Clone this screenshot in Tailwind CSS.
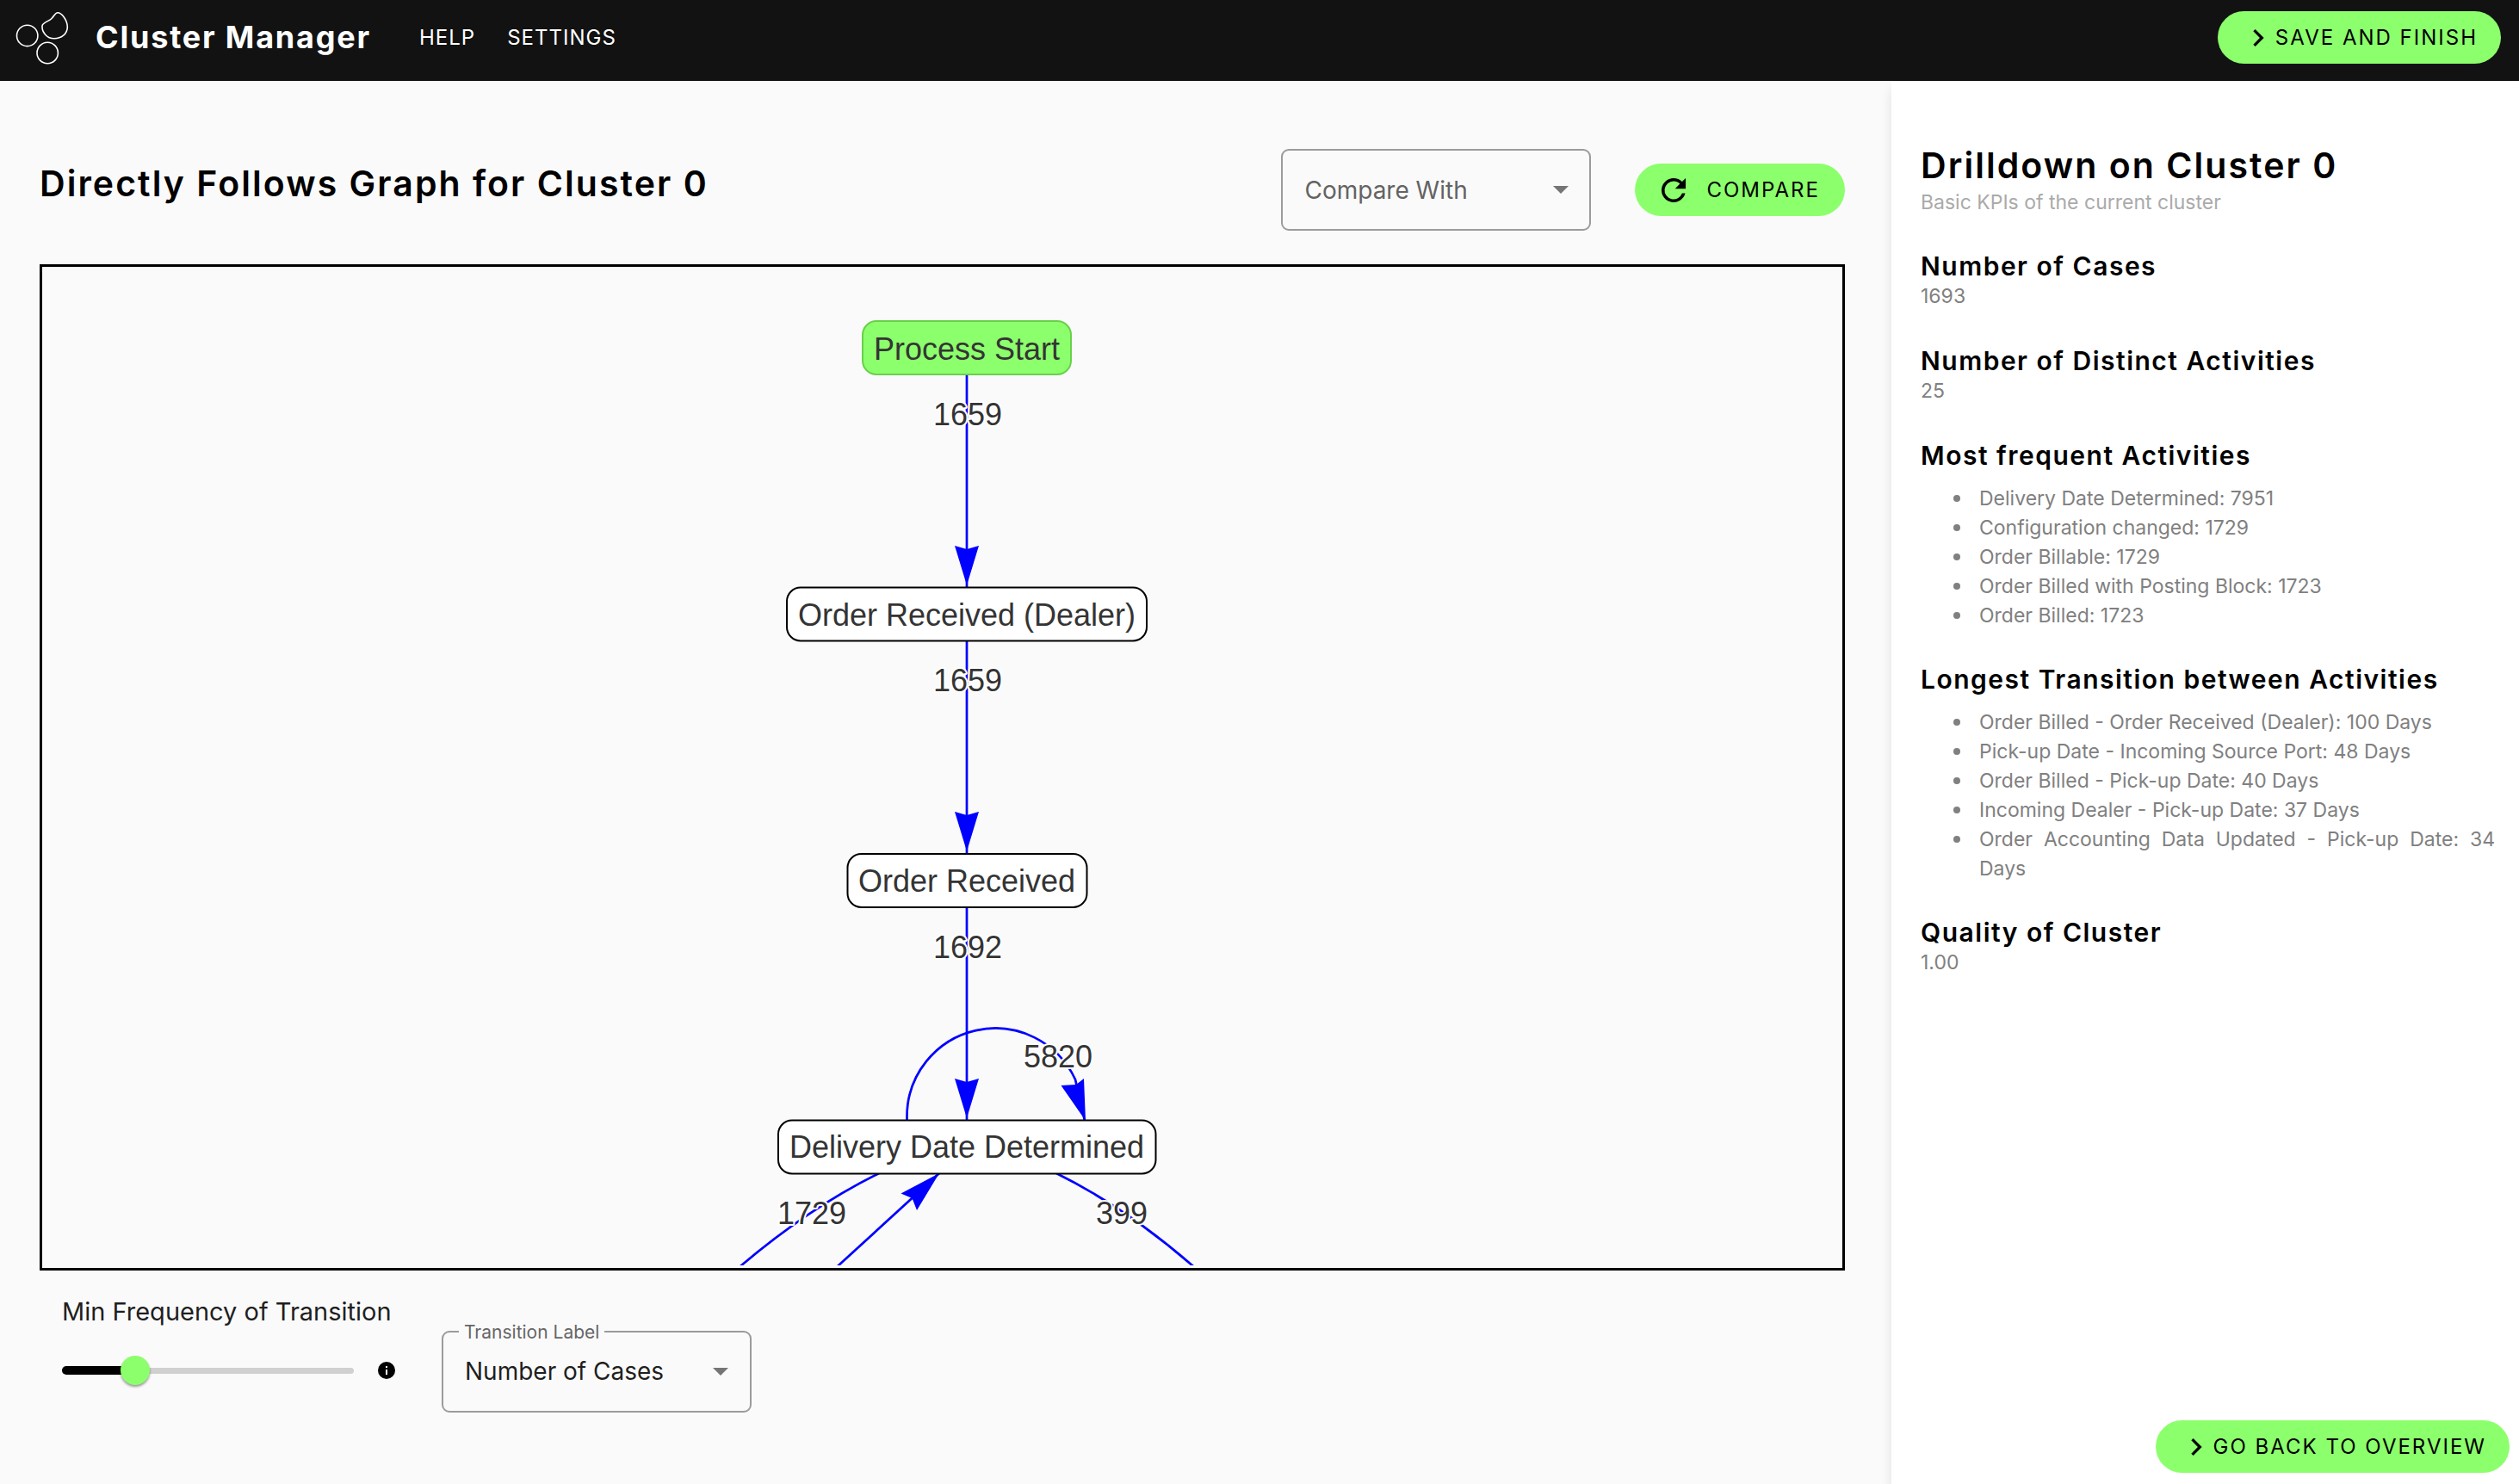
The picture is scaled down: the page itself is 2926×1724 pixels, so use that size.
<!DOCTYPE html>
<html lang="en">
<head>
<meta charset="utf-8">
<meta name="viewport" content="width=device-width, initial-scale=1">
<title>Cluster Manager</title>
<script src="https://cdn.jsdelivr.net/npm/@tailwindcss/browser@4"></script>
</head>
<body class="flex min-h-screen flex-col bg-[#fafafa] font-[Inter,sans-serif] text-black">

<header class="flex h-[94px] shrink-0 items-start bg-[#121212] pt-[13px] pr-[21px] text-white">
  <div class="flex h-[61px] flex-1 items-center">
    <svg class="ml-4 h-[64px] w-[66px]" viewBox="16 11 66 64" fill="none" stroke="#fff" stroke-width="1.6" aria-hidden="true">
      <circle cx="31.7" cy="40.4" r="12.2"/>
      <circle cx="55.2" cy="60.5" r="12.2"/>
      <path d="M49 29C49.5 25 56.500 24 60 20.500C63 17.500 64 13.800 67 13.800C71.500 13.800 78.300 22 78.300 30.500C78.300 38.500 71 43.800 63 43.800C54.500 43.800 48.500 36.500 49 29Z"/>
    </svg>
    <span class="ml-[29px] pb-[2px] text-[36px] leading-[46px] font-bold tracking-wider">Cluster Manager</span>
    <nav class="ml-[56px] flex items-center gap-[37px] text-[24px] tracking-[1px]">
      <a href="#help">HELP</a>
      <a href="#settings">SETTINGS</a>
    </nav>
  </div>
  <button type="button" class="flex h-[61px] items-center rounded-full bg-[#8cff6c] pr-[27px] pl-[27px] text-[24px] tracking-[2px] text-black">
    <svg class="size-10" viewBox="0 0 24 24" aria-hidden="true"><path d="M10 6 8.590 7.410 13.170 12l-4.580 4.590L10 18l6-6z"/></svg>
    SAVE AND FINISH
  </button>
</header>

<div class="flex flex-1">
  <main class="flex min-w-0 flex-1 flex-col pt-[79px] pr-[54px] pl-[46px]">
    <div class="flex items-center">
      <h1 class="flex-1 pb-[15px] text-[41px] leading-[48px] font-semibold tracking-wider">Directly Follows Graph for Cluster 0</h1>
      <div class="relative">
        <select aria-label="Compare With" class="block h-[95px] w-[360px] appearance-none rounded-[9px] border-2 border-[#9b9b9b] bg-transparent pl-[25px] text-[28px] text-[#636363]">
          <option>Compare With</option>
        </select>
        <svg class="pointer-events-none absolute top-[43px] right-[26px] h-[9px] w-[18px]" viewBox="0 0 18 9" fill="#757575" aria-hidden="true"><path d="M0 0h18L9 9z"/></svg>
      </div>
      <button type="button" class="ml-[51px] flex h-[61px] items-center gap-[17px] rounded-full bg-[#8cff6c] pr-[29px] pl-6 text-[24px] tracking-[2px]">
        <svg class="size-[42px]" viewBox="0 0 24 24" aria-hidden="true"><path d="M17.650 6.350A7.958 7.958 0 0 0 12 4a8 8 0 1 0 7.730 10h-2.080A6 6 0 1 1 12 6c1.660 0 3.140.690 4.220 1.780L13 11h7V4z"/></svg>
        COMPARE
      </button>
    </div>

    <!-- Process graph -->
    <div class="mt-[39px] border-[3px] border-black pb-[3px]">
      <svg class="block h-auto w-full" viewBox="49 310 2091 1160" font-family="'Liberation Sans', Arial, sans-serif" font-size="36" text-anchor="middle" fill="#343434" role="img" aria-label="Directly follows graph">
        <g fill="none" stroke="#0000ff" stroke-width="2.700">
          <path d="M1123 436V682M1123 745V992M1123 1054V1302"/>
          <path d="M1053.500 1302V1298A102.500 102.500 0 0 1 1249 1254L1260 1302"/>
          <path d="M1021 1363Q940 1403 860 1471"/>
          <path d="M973 1471L1091 1363"/>
          <path d="M1227 1363Q1308 1403 1386 1471"/>
        </g>
        <g fill="#0000ff">
          <path d="M1123 680L1109 634L1123 638L1137 634z"/>
          <path d="M1123 989L1109 943L1123 947L1137 943z"/>
          <path d="M1123 1299L1109 1253L1123 1257L1137 1253z"/>
          <path d="M1261 1302L1232.500 1261L1250 1260L1259 1253z"/>
          <path d="M1091 1363L1046.500 1386.500L1059.500 1392L1065 1406z"/>
        </g>
        <g fill="#fff" stroke="#000" stroke-width="2">
          <rect x="1002" y="373" width="242" height="62" rx="16" fill="#8cff6c" stroke="#69d04b"/>
          <rect x="914" y="682.500" width="418" height="62" rx="16"/>
          <rect x="984.500" y="992" width="278" height="62" rx="16"/>
          <rect x="904" y="1301.500" width="438.500" height="62" rx="16"/>
        </g>
        <text x="1123" y="418">Process Start</text>
        <text x="1123" y="727">Order Received (Dealer)</text>
        <text x="1123" y="1036">Order Received</text>
        <text x="1123" y="1345">Delivery Date Determined</text>
        <g stroke="#fff" stroke-width="4" stroke-linejoin="round" paint-order="stroke">
          <text x="1124" y="494">1659</text>
          <text x="1124" y="803">1659</text>
          <text x="1124" y="1113">1692</text>
          <text x="1229" y="1240">5820</text>
          <text x="943" y="1422">1729</text>
          <text x="1303" y="1422">399</text>
        </g>
      </svg>
    </div>

    <div class="flex items-start pl-[26px]">
      <div class="w-[389px] pt-[30px]">
        <label for="freq" class="block text-[29px] leading-9 text-[#1f1f1f]">Min Frequency of Transition</label>
        <div class="mt-[33px] flex items-center">
          <div class="relative h-[34px] w-[339px]">
            <span class="absolute top-[14px] left-0 h-[7px] w-full rounded-full bg-[#d0d0d0]"></span>
            <span class="absolute top-3 left-0 h-[10px] w-1/4 rounded-full bg-black"></span>
            <input id="freq" type="range" min="0" max="100" value="25" class="absolute top-0 -left-[17px] h-[34px] w-[373px] appearance-none bg-transparent [&::-webkit-slider-thumb]:size-[34px] [&::-webkit-slider-thumb]:appearance-none [&::-webkit-slider-thumb]:rounded-full [&::-webkit-slider-thumb]:bg-[#8cff6c] [&::-webkit-slider-thumb]:shadow-[0_2px_3px_rgba(0,0,0,0.4)]">
          </div>
          <svg class="ml-[26px] size-6" viewBox="0 0 24 24" aria-hidden="true"><circle cx="12" cy="12" r="10"/><path fill="#fff" d="M11 7h2v2h-2zM11 11h2v6h-2z"/></svg>
        </div>
      </div>
      <div class="relative mt-[70px] ml-[52px]">
        <select id="tlabel" class="block h-[95px] w-[360px] appearance-none rounded-[9px] border-2 border-[#9b9b9b] bg-transparent pb-[2px] pl-[25px] text-[28px] text-[#1f1f1f]">
          <option>Number of Cases</option>
        </select>
        <label for="tlabel" class="absolute -top-[10px] left-5 bg-[#fafafa] px-[6px] text-[21px] leading-6 text-[#666]">Transition Label</label>
        <svg class="pointer-events-none absolute top-[43px] right-[27px] h-[9px] w-[18px]" viewBox="0 0 18 9" fill="#757575" aria-hidden="true"><path d="M0 0h18L9 9z"/></svg>
      </div>
    </div>
  </main>

  <aside class="flex w-[729px] shrink-0 flex-col bg-white shadow-[0_10px_12px_rgba(0,0,0,0.1)]">
    <div class="pt-[74px] pr-[28px] pl-[34px] text-[23px] leading-[34px] text-[#808080]">
      <h2 class="text-[41px] leading-[48px] font-semibold tracking-wider text-black">Drilldown on Cluster 0</h2>
      <p class="mt-[2px] text-[#aaa]">Basic KPIs of the current cluster</p>

      <h3 class="mt-[39px] text-[30px] leading-9 font-semibold tracking-wider text-black">Number of Cases</h3>
      <p>1693</p>

      <h3 class="mt-10 text-[30px] leading-9 font-semibold tracking-wider text-black">Number of Distinct Activities</h3>
      <p>25</p>

      <h3 class="mt-10 text-[30px] leading-9 font-semibold tracking-wider text-black">Most frequent Activities</h3>
      <ul class="mt-[15px] pl-[68px] text-justify *:relative *:before:absolute *:before:top-[13px] *:before:-left-[30px] *:before:size-2 *:before:rounded-full *:before:bg-current">
        <li>Delivery Date Determined: 7951</li>
        <li>Configuration changed: 1729</li>
        <li>Order Billable: 1729</li>
        <li>Order Billed with Posting Block: 1723</li>
        <li>Order Billed: 1723</li>
      </ul>

      <h3 class="mt-[39px] text-[30px] leading-9 font-semibold tracking-wider text-black">Longest Transition between Activities</h3>
      <ul class="mt-[15px] pl-[68px] text-justify *:relative *:before:absolute *:before:top-[13px] *:before:-left-[30px] *:before:size-2 *:before:rounded-full *:before:bg-current">
        <li>Order Billed - Order Received (Dealer): 100 Days</li>
        <li>Pick-up Date - Incoming Source Port: 48 Days</li>
        <li>Order Billed - Pick-up Date: 40 Days</li>
        <li>Incoming Dealer - Pick-up Date: 37 Days</li>
        <li>Order Accounting Data Updated - Pick-up Date: 34 Days</li>
      </ul>

      <h3 class="mt-[39px] text-[30px] leading-9 font-semibold tracking-wider text-black">Quality of Cluster</h3>
      <p>1.00</p>
    </div>
    <button type="button" class="mt-auto mr-[11px] mb-[13px] flex h-[61px] items-center self-end rounded-full bg-[#8cff6c] pr-[27px] pl-[27px] text-[24px] tracking-[2px]">
      <svg class="size-10" viewBox="0 0 24 24" aria-hidden="true"><path d="M10 6 8.590 7.410 13.170 12l-4.580 4.590L10 18l6-6z"/></svg>
      GO BACK TO OVERVIEW
    </button>
  </aside>
</div>
</body>
</html>
